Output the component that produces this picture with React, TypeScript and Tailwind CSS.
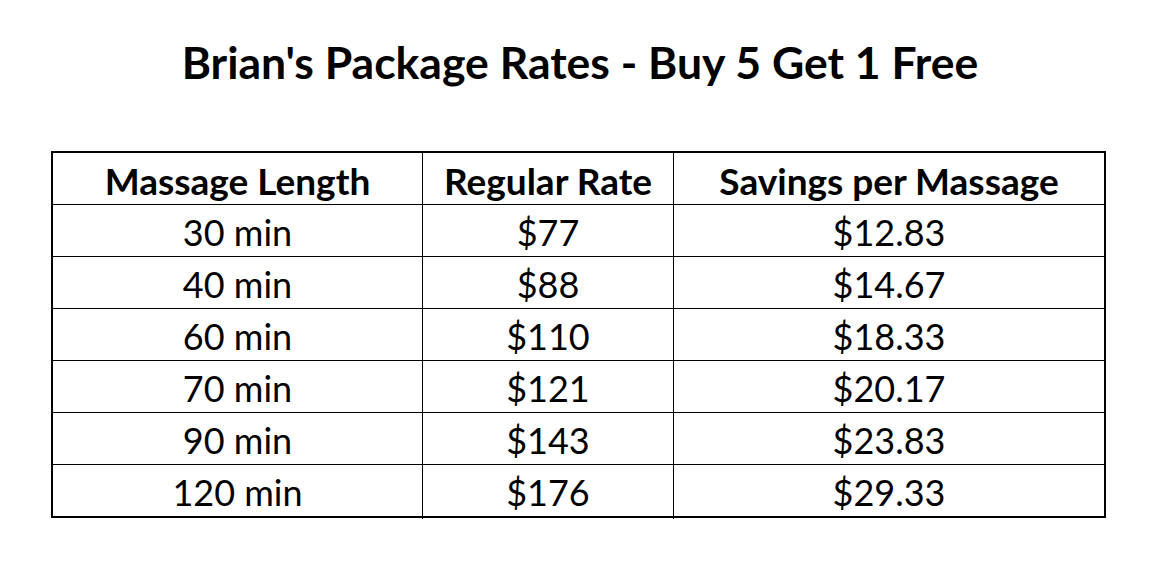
import React from "react";

const rows = [
  ["30 min", "$77", "$12.83"],
  ["40 min", "$88", "$14.67"],
  ["60 min", "$110", "$18.33"],
  ["70 min", "$121", "$20.17"],
  ["90 min", "$143", "$23.83"],
  ["120 min", "$176", "$29.33"],
];

export default function App() {
  return (
    <div className="w-[1163px] h-[562px] bg-white text-black" style={{ fontFamily: "Lato, 'Open Sans', sans-serif" }}>
      <div className="pt-[36px] h-[151px]">
        <h1 className="text-center font-bold text-[44.5px] leading-[52px] ml-[-3px]">Brian's Package Rates - Buy 5 Get 1 Free</h1>
      </div>
      <div className="ml-[51px] w-[1055px] border-2 border-black">
        <div className="grid grid-cols-[370px_251px_1fr] h-[51px] font-bold text-[37px] text-center">
          <div className="h-full flex items-center justify-center border-r border-black pb-[2px]">Massage Length</div>
          <div className="h-full flex items-center justify-center border-r border-black pb-[2px]">Regular Rate</div>
          <div className="h-full flex items-center justify-center pb-[2px]">Savings per Massage</div>
        </div>
        {rows.map((r) => (
          <div key={r[0]} className="grid grid-cols-[370px_251px_1fr] h-[52px] border-t border-black text-[36px] text-center">
            <div className="h-full flex items-center justify-center border-r border-black">{r[0]}</div>
            <div className="h-full flex items-center justify-center border-r border-black">{r[1]}</div>
            <div className="h-full flex items-center justify-center">{r[2]}</div>
          </div>
        ))}
      </div>
    </div>
  );
}
